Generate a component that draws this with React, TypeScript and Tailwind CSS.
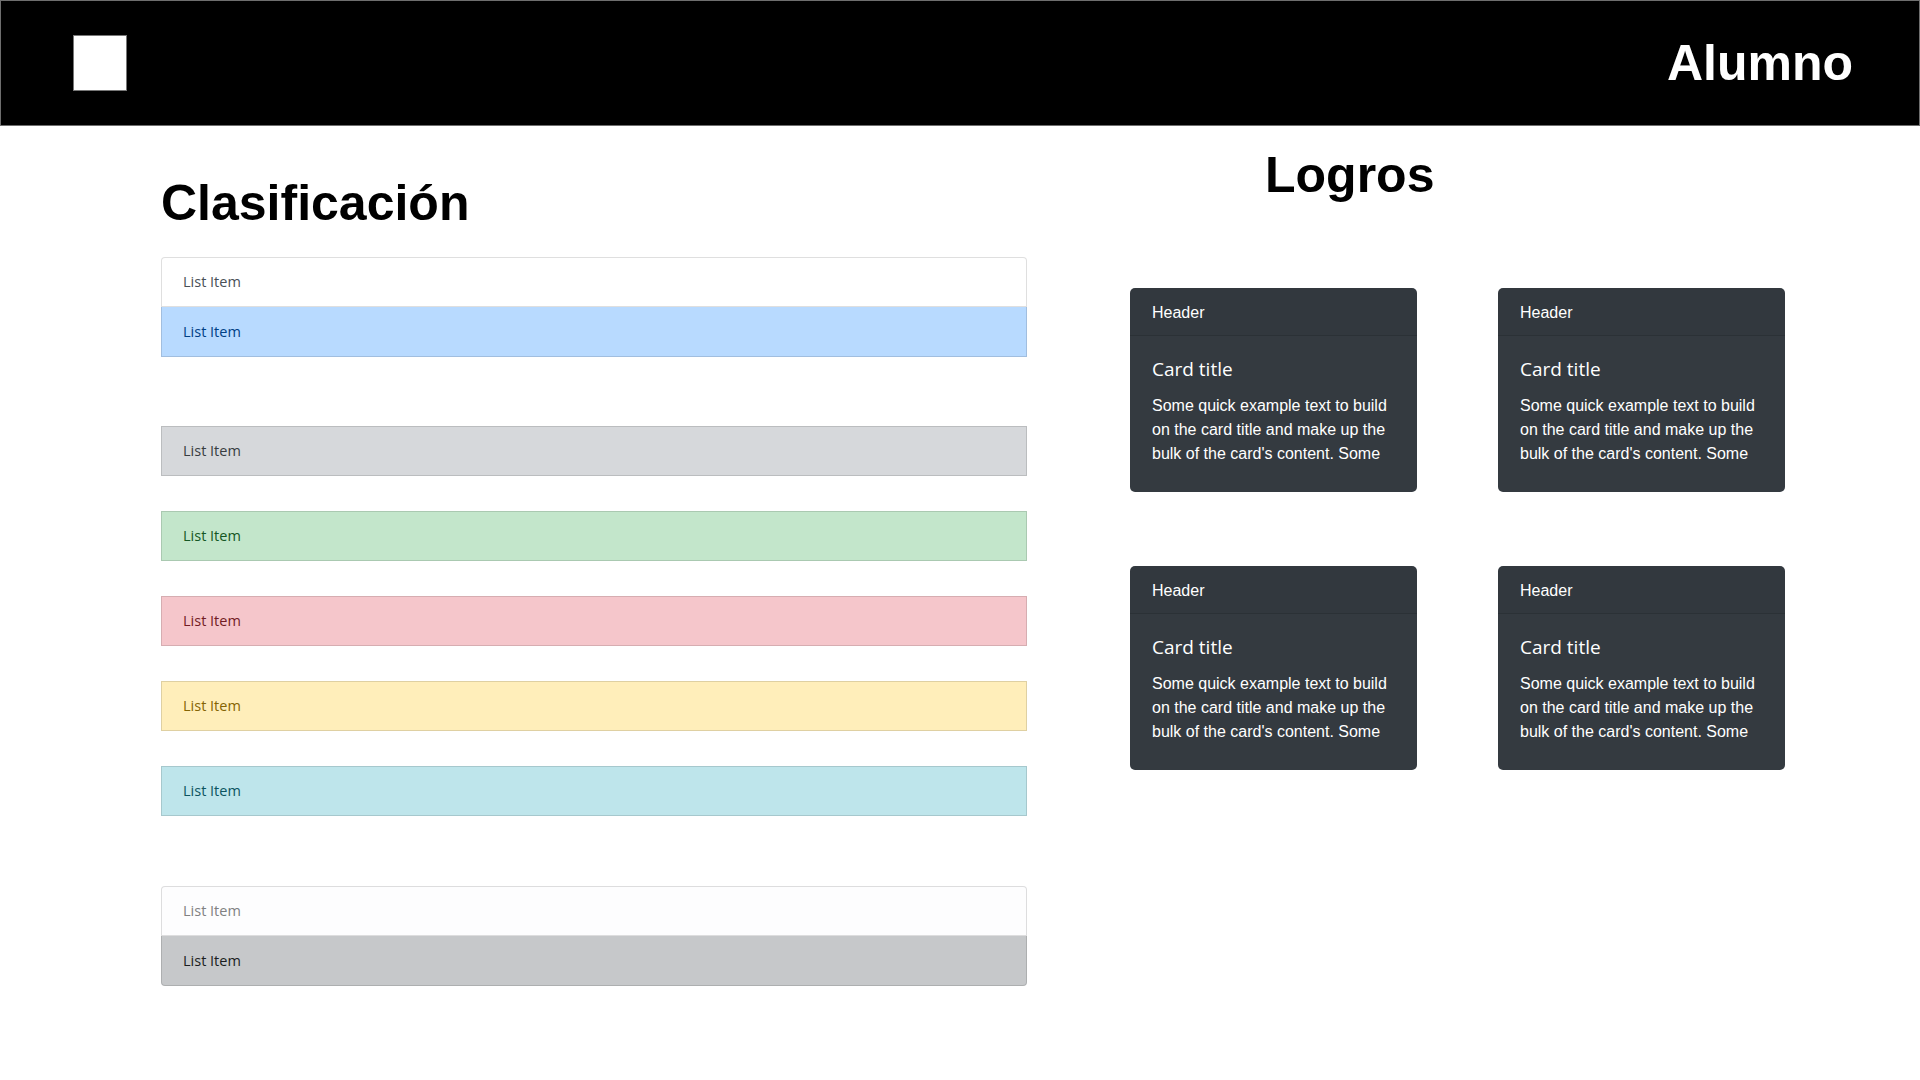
import React from 'react'

type Tone = {
  bg: string
  text: string
}

const groupTop: { tone: Tone; cls: string }[] = [
  { tone: { bg: 'bg-white', text: 'text-[#495057]' }, cls: 'rounded-t-[4px]' },
  { tone: { bg: 'bg-[#b8daff]', text: 'text-[#004085]' }, cls: 'border-t-0' },
]

const singles: Tone[] = [
  { bg: 'bg-[#d6d8db]', text: 'text-[#383d41]' },
  { bg: 'bg-[#c3e6cb]', text: 'text-[#155724]' },
  { bg: 'bg-[#f5c6cb]', text: 'text-[#721c24]' },
  { bg: 'bg-[#ffeeba]', text: 'text-[#856404]' },
  { bg: 'bg-[#bee5eb]', text: 'text-[#0c5460]' },
]

const groupBottom: { tone: Tone; cls: string }[] = [
  { tone: { bg: 'bg-[#fdfdfe]', text: 'text-[#818182]' }, cls: 'rounded-t-[4px]' },
  { tone: { bg: 'bg-[#c6c8ca]', text: 'text-[#1b1e21]' }, cls: 'border-t-0 rounded-b-[4px]' },
]

function ListItem({ tone, className = '' }: { tone: Tone; className?: string }) {
  return (
    <div
      className={`h-[50px] flex items-center pl-[21px] pr-5 border border-black/[0.125] text-[14.5px] font-['Open_Sans',sans-serif] ${tone.bg} ${tone.text} ${className}`}
    >
      List Item
    </div>
  )
}

function Card() {
  return (
    <div className="w-[287px] h-[204px] bg-[#343a40] rounded-[5px] text-white overflow-hidden flex flex-col">
      <div className="h-[48px] shrink-0 flex items-center pt-[2px] px-[22px] bg-black/[0.03] border-b border-black/[0.125] text-[16px] font-['Liberation_Sans',Arial,sans-serif]">
        Header
      </div>
      <div className="px-[22px] pt-[21px]">
        <h5 className="text-[19px] leading-[24px] mb-[13px] font-['Open_Sans',sans-serif]">Card title</h5>
        <p className="text-[16px] leading-[24px] font-['Liberation_Sans',Arial,sans-serif]">
          Some quick example text to build on the card title and make up the bulk of the card's content. Some
        </p>
      </div>
    </div>
  )
}

export default function App() {
  return (
    <div className="min-h-screen bg-white font-['Liberation_Sans',Arial,sans-serif]">
      {/* Barra superior */}
      <header className="h-[126px] bg-black border border-[#6e6e6e] flex items-center justify-between pl-[72px] pr-[66px]">
        <div className="w-[54px] h-[56px] bg-white border border-[#777]" />
        <h1 className="text-white font-bold text-[50px] leading-none">Alumno</h1>
      </header>

      <main className="flex">
        {/* Clasificación */}
        <section className="ml-[161px] w-[866px] pt-[52px] pb-10">
          <h2 className="text-[50px] leading-none font-bold text-black mb-[29px]">Clasificación</h2>

          <div className="flex flex-col">
            {groupTop.map((it, i) => (
              <ListItem key={i} tone={it.tone} className={it.cls} />
            ))}
          </div>

          <div className="flex flex-col gap-[35px] mt-[69px]">
            {singles.map((t, i) => (
              <ListItem key={i} tone={t} />
            ))}
          </div>

          <div className="flex flex-col mt-[70px]">
            {groupBottom.map((it, i) => (
              <ListItem key={i} tone={it.tone} className={it.cls} />
            ))}
          </div>
        </section>

        {/* Logros */}
        <section className="ml-[103px] pt-[24px]">
          <h2 className="text-[50px] leading-none font-bold text-black pl-[135px]">Logros</h2>
          <div className="grid grid-cols-[287px_287px] gap-x-[81px] gap-y-[74px] mt-[88px]">
            <Card />
            <Card />
            <Card />
            <Card />
          </div>
        </section>
      </main>
    </div>
  )
}
